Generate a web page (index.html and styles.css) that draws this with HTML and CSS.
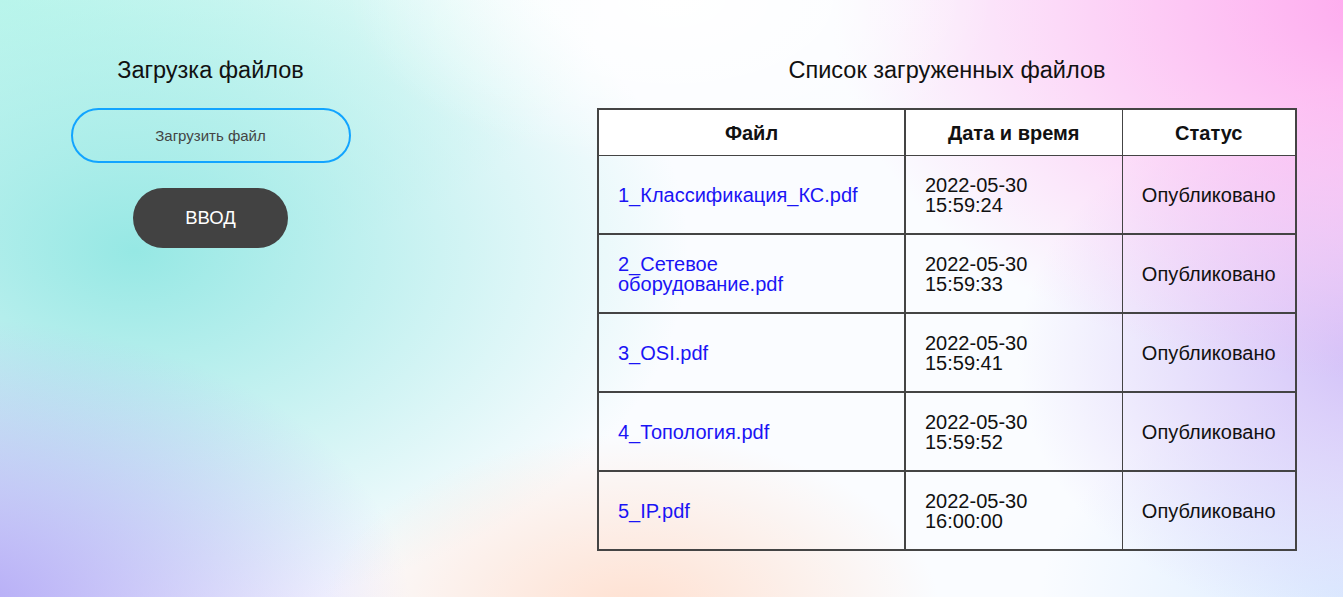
FILE: index.html
```html
<!DOCTYPE html>
<html lang="ru">
<head>
<meta charset="utf-8">
<title>Загрузка файлов</title>
<link rel="stylesheet" href="styles.css">
</head>
<body>
<main class="page">
  <section class="upload">
    <h2 class="title">Загрузка файлов</h2>
    <label class="file-pill">Загрузить файл</label>
    <button class="submit">ВВОД</button>
  </section>
  <section class="list">
    <h2 class="title">Список загруженных файлов</h2>
    <table class="files">
      <colgroup><col class="w1"><col class="w2"><col class="w3"></colgroup>
      <thead>
        <tr><th class="c1">Файл</th><th class="c2">Дата и время</th><th class="c3">Статус</th></tr>
      </thead>
      <tbody>
        <tr><td class="c1"><a href="#">1_Классификация_КС.pdf</a></td><td class="c2">2022-05-30<br>15:59:24</td><td class="c3">Опубликовано</td></tr>
        <tr><td class="c1"><a href="#">2_Сетевое<br>оборудование.pdf</a></td><td class="c2">2022-05-30<br>15:59:33</td><td class="c3">Опубликовано</td></tr>
        <tr><td class="c1"><a href="#">3_OSI.pdf</a></td><td class="c2">2022-05-30<br>15:59:41</td><td class="c3">Опубликовано</td></tr>
        <tr><td class="c1"><a href="#">4_Топология.pdf</a></td><td class="c2">2022-05-30<br>15:59:52</td><td class="c3">Опубликовано</td></tr>
        <tr><td class="c1"><a href="#">5_IP.pdf</a></td><td class="c2">2022-05-30<br>16:00:00</td><td class="c3">Опубликовано</td></tr>
      </tbody>
    </table>
  </section>
</main>
</body>
</html>
```
FILE: styles.css
```css
html, body {
  margin: 0;
  height: 100%;
}
body {
  font-family: "Liberation Sans", Arial, sans-serif;
  color: #111;
  overflow: hidden;
  background:
    radial-gradient(ellipse 30% 35% at 50% 0%, rgba(255,255,255,1), rgba(255,255,255,0) 80%),
    radial-gradient(ellipse 55% 85% at 103% 0%, rgba(255,168,238,1), rgba(255,180,240,0) 75%),
    radial-gradient(ellipse 35% 60% at 102% 60%, rgba(208,190,248,0.95), rgba(210,192,250,0) 75%),
    radial-gradient(ellipse 30% 45% at 100% 100%, rgba(220,236,255,1), rgba(220,236,255,0) 75%),
    radial-gradient(ellipse 32% 42% at 47% 103%, rgba(255,224,208,1), rgba(255,225,208,0) 72%),
    radial-gradient(ellipse 42% 62% at -3% 103%, rgba(178,168,246,1), rgba(178,168,246,0) 80%),
    radial-gradient(ellipse 55% 82% at 10% 42%, rgba(150,232,228,1), rgba(160,234,230,0) 75%),
    radial-gradient(ellipse 50% 55% at 0% 0%, rgba(198,250,238,1), rgba(198,250,238,0) 90%),
    #fafcff;
}
.page {
  display: flex;
  align-items: flex-start;
  padding-top: 57px;
}
.upload {
  width: 421px;
  display: flex;
  flex-direction: column;
  align-items: center;
}
.list {
  margin-left: 176px;
  width: 700px;
  display: flex;
  flex-direction: column;
  align-items: center;
}
.title {
  margin: 0 0 24px;
  font-weight: normal;
  font-size: 23.5px;
  line-height: 27px;
  color: #111;
}
.file-pill {
  box-sizing: border-box;
  width: 280px;
  height: 55px;
  border: 2px solid #12a4ff;
  border-radius: 28px;
  display: flex;
  align-items: center;
  justify-content: center;
  font-size: 15px;
  color: #444;
  margin-bottom: 25px;
}
.submit {
  width: 155px;
  height: 60px;
  border: none;
  border-radius: 30px;
  background: #424242;
  color: #fff;
  font-family: inherit;
  font-size: 18.5px;
  padding: 0;
}
.files {
  border-collapse: collapse;
  table-layout: fixed;
  width: 698px;
  border: 2px solid #444;
  font-size: 20px;
  line-height: 20px;
}
.files .w1 { width: 307px; }
.files .w2 { width: 217px; }
.files .w3 { width: 174px; }
.files th {
  background: #fff;
  font-weight: bold;
  height: 45px;
  padding: 0 10px;
  text-align: center;
  border-bottom: 1px solid #444;
  font-size: 20px;
}
.files td {
  height: 77px;
  padding: 0 19px;
  border-top: 2px solid #444;
  vertical-align: middle;
}
.files tbody tr:first-child td {
  border-top: 1px solid #444;
}
.files .c1 {
  border-right: 2px solid #444;
}
.files .c2 {
  border-right: 1px solid #444;
}
.files .c3 {
  text-align: center;
  padding: 0 8px;
}
.files a {
  color: #1a14f5;
  text-decoration: none;
}
```
